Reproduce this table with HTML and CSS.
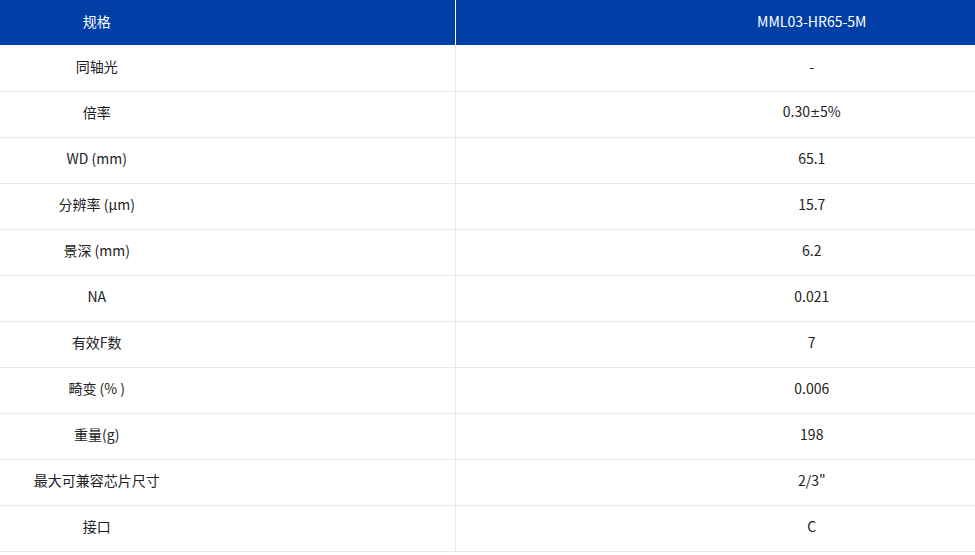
FILE: index.html
```html
<!DOCTYPE html>
<html lang="zh-CN">
<head>
<meta charset="utf-8">
<title>规格</title>
<link rel="stylesheet" href="styles.css">
</head>
<body>
<div class="wrap">
  <table class="spec">
    <thead>
      <tr><th class="k">规格</th><th class="v">MML03-HR65-5M</th></tr>
    </thead>
    <tbody>
      <tr><td class="k">同轴光</td><td class="v">-</td></tr>
      <tr><td class="k">倍率</td><td class="v">0.30<span class="pm">±</span>5%</td></tr>
      <tr><td class="k">WD (mm)</td><td class="v">65.1</td></tr>
      <tr><td class="k">分辨率 (μm)</td><td class="v">15.7</td></tr>
      <tr><td class="k">景深 (mm)</td><td class="v">6.2</td></tr>
      <tr><td class="k">NA</td><td class="v">0.021</td></tr>
      <tr><td class="k">有效F数</td><td class="v">7</td></tr>
      <tr><td class="k">畸变 (% )</td><td class="v">0.006</td></tr>
      <tr><td class="k">重量(g)</td><td class="v">198</td></tr>
      <tr><td class="k">最大可兼容芯片尺寸</td><td class="v">2/3"</td></tr>
      <tr><td class="k">接口</td><td class="v">C</td></tr>
    </tbody>
  </table>
</div>
</body>
</html>
```
FILE: styles.css
```css
html, body {
  margin: 0;
  padding: 0;
  background: #fff;
}
body {
  overflow: hidden;
  font-family: "Noto Sans CJK SC", "Noto Sans", sans-serif;
  font-size: 14px;
  color: #222;
}
.wrap {
  width: 975px;
  height: 555px;
  overflow: hidden;
}
.spec {
  width: 1168px;
  border-collapse: collapse;
  table-layout: fixed;
}
.spec th,
.spec td {
  text-align: center;
  font-weight: normal;
  padding: 0 0 4px 0;
  line-height: 20px;
  box-sizing: border-box;
}
.spec th {
  background: #003fa6;
  color: #fff;
  height: 45px;
}
.spec th.k {
  border-right: 1px solid #fff;
}
.spec td {
  height: 46px;
  border-bottom: 1px solid #e8e8e8;
}
.spec td.k {
  border-right: 1px solid #e8e8e8;
}
.spec .k {
  width: 455px;
  padding-right: 261px;
}
.spec .v {
  width: 713px;
}
.pm {
  font-family: "DejaVu Sans", sans-serif;
  font-size: 12px;
}
```
